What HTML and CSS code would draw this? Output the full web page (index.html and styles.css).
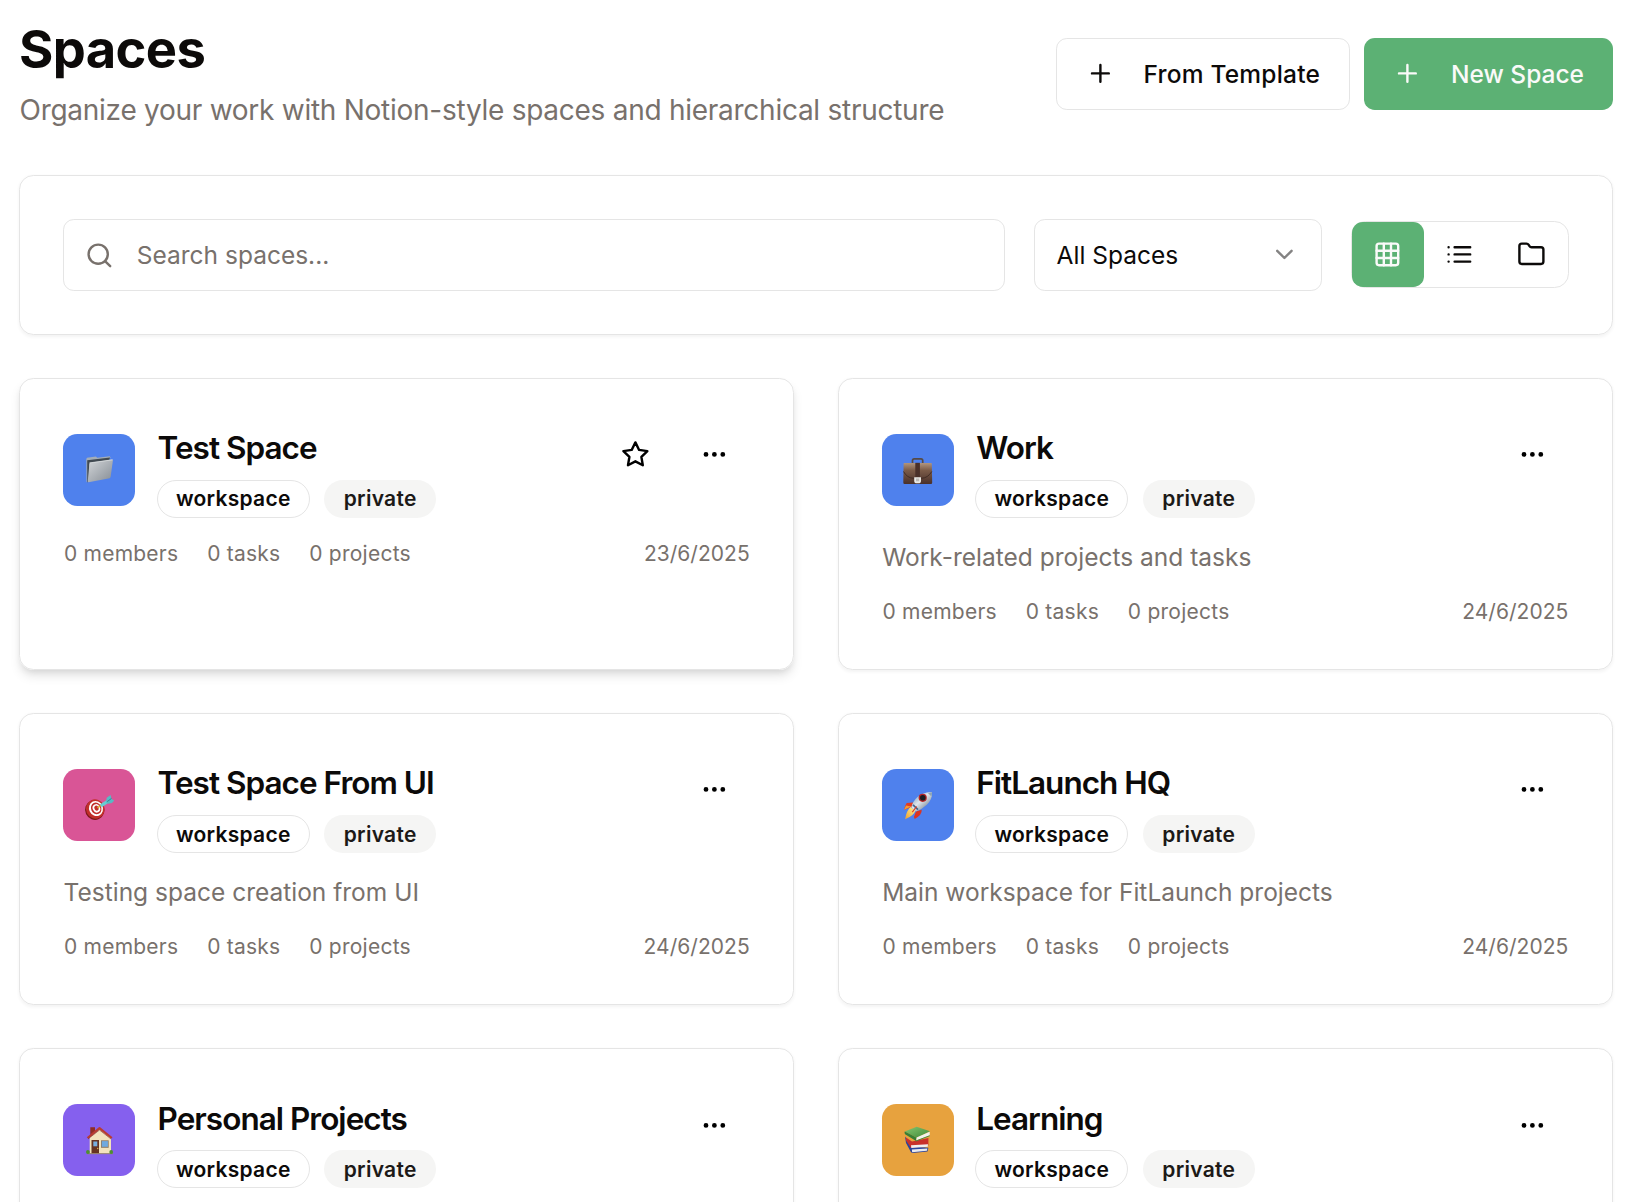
FILE: index.html
```html
<!DOCTYPE html>
<html lang="en">
<head>
<meta charset="utf-8">
<title>Spaces</title>
<link rel="stylesheet" href="styles.css">
</head>
<body>
<svg class="defs" width="0" height="0">
  <defs>
    <linearGradient id="silver" x1="0" y1="0" x2="1" y2="1"><stop offset="0" stop-color="#d3d6d9"/><stop offset="1" stop-color="#858c94"/></linearGradient>
    <linearGradient id="leather" x1="0" y1="0" x2="0" y2="1"><stop offset="0" stop-color="#b0957f"/><stop offset=".35" stop-color="#7b5b48"/><stop offset="1" stop-color="#49302a"/></linearGradient>
    <linearGradient id="hull" x1="0" y1="0" x2="1" y2="1"><stop offset="0" stop-color="#5f88ab"/><stop offset=".45" stop-color="#dfe6ec"/><stop offset="1" stop-color="#4c5e6e"/></linearGradient>
    <linearGradient id="flame" x1="1" y1="0" x2="0" y2="1"><stop offset="0" stop-color="#fff59a"/><stop offset="1" stop-color="#f0a02c"/></linearGradient>
    <linearGradient id="cover" x1="0" y1="0" x2="1" y2="1"><stop offset="0" stop-color="#86c671"/><stop offset="1" stop-color="#3d8a38"/></linearGradient>
    <symbol id="dots" viewBox="0 0 24 24"><circle cx="12" cy="12" r="1"/><circle cx="19" cy="12" r="1"/><circle cx="5" cy="12" r="1"/></symbol>
    <symbol id="plus" viewBox="0 0 24 24"><path d="M5 12h14M12 5v14"/></symbol>
  </defs>
</svg>
<main class="page">
  <header class="page-header">
    <div>
      <h1 class="page-title">Spaces</h1>
      <p class="page-subtitle">Organize your work with Notion-style spaces and hierarchical structure</p>
    </div>
    <div class="header-actions">
      <button class="btn btn-outline"><svg class="icon"><use href="#plus"/></svg><span>From Template</span></button>
      <button class="btn btn-primary"><svg class="icon"><use href="#plus"/></svg><span>New Space</span></button>
    </div>
  </header>

  <section class="toolbar">
    <div class="search">
      <svg class="icon" viewBox="0 0 24 24"><circle cx="11" cy="11" r="8"/><path d="m21 21-4.3-4.3"/></svg>
      <span>Search spaces...</span>
    </div>
    <div class="select">
      <span>All Spaces</span>
      <svg class="icon chevron" viewBox="0 0 24 24"><path d="m6 9 6 6 6-6"/></svg>
    </div>
    <div class="views">
      <button class="view active"><svg class="icon" viewBox="0 0 24 24"><rect x="3" y="3" width="18" height="18" rx="2"/><path d="M3 9h18M3 15h18M9 3v18M15 3v18"/></svg></button>
      <button class="view"><svg class="icon" viewBox="0 0 24 24"><path d="M8 6h13M8 12h13M8 18h13M3 6h.01M3 12h.01M3 18h.01"/></svg></button>
      <button class="view"><svg class="icon" viewBox="0 0 24 24"><path d="M20 20a2 2 0 0 0 2-2V8a2 2 0 0 0-2-2h-7.9a2 2 0 0 1-1.69-.9L9.6 3.9A2 2 0 0 0 7.93 3H4a2 2 0 0 0-2 2v13a2 2 0 0 0 2 2Z"/></svg></button>
    </div>
  </section>

  <section class="grid">
    <article class="card raised">
      <div class="card-head">
        <div class="tile blue">
          <svg viewBox="0 0 72 72">
            <path d="M23.300 25 24 23.700l9-1.200 1.200 1.200 12.600-1.400.8 1.200-22.500 22-1.600 2.900Z" fill="#a3adb8"/>
            <path d="M24.200 26.200 47 23.500l-1.200 4-19.500 2.500-.6 18-1.400.2Z" fill="#414a52"/>
            <path d="M26.500 28.700 49.300 25.600Q50 25.600 49.900 26.500L47.600 43 46.700 44.200 25.500 48.300 24.700 48Z" fill="url(#silver)"/>
            <path d="M26.500 28.900 49.500 25.800" stroke="#e5e8ea" stroke-width=".7"/>
          </svg>
        </div>
        <div class="heading"><h2>Test Space</h2><div class="badges"><span class="badge outline">workspace</span><span class="badge soft">private</span></div></div>
        <div class="actions">
          <button class="action"><svg class="icon" viewBox="0 0 24 24"><path d="m12 2 3.090 6.260L22 9.270l-5 4.870 1.180 6.880L12 17.770l-6.180 3.250L7 14.140 2 9.270l6.910-1.010Z"/></svg></button>
          <button class="action"><svg class="icon"><use href="#dots"/></svg></button>
        </div>
      </div>
      <div class="stats"><span>0 members</span><span>0 tasks</span><span>0 projects</span><time>23/6/2025</time></div>
    </article>

    <article class="card">
      <div class="card-head">
        <div class="tile blue">
          <svg viewBox="0 0 72 72">
            <path d="M30.500 29v-2.500q0-1.700 1.700-1.700h6.800q1.700 0 1.700 1.700V29" fill="none" stroke="#564a46" stroke-width="1.700"/>
            <path d="M22 29h27q.8 0 .8.8L50.200 48.500q0 1.500-1.300 1.500H22.600q-1.300 0-1.300-1.500l.3-18.700q0-.8.4-.8Z" fill="url(#leather)"/>
            <path d="M21.500 37.500q3.500 6.500 10 6.800h8q6.500-.3 10.300-6.800" fill="none" stroke="#3d2922" stroke-width=".9"/>
            <rect x="33.300" y="28.800" width="4.600" height="14.500" fill="#4a3029"/>
            <path d="M32.200 43.200h6.800v3.500q0 2.600-2.600 2.600h-1.600q-2.600 0-2.600-2.600Z" fill="#e9e8e5"/>
            <rect x="34" y="44.500" width="3.200" height="2.800" fill="#bcb9b5"/>
          </svg>
        </div>
        <div class="heading"><h2>Work</h2><div class="badges"><span class="badge outline">workspace</span><span class="badge soft">private</span></div></div>
        <div class="actions"><button class="action"><svg class="icon"><use href="#dots"/></svg></button></div>
      </div>
      <p class="desc">Work-related projects and tasks</p>
      <div class="stats"><span>0 members</span><span>0 tasks</span><span>0 projects</span><time>24/6/2025</time></div>
    </article>

    <article class="card lower">
      <div class="card-head">
        <div class="tile pink">
          <svg viewBox="0 0 72 72">
            <ellipse cx="31.700" cy="41" rx="9.600" ry="10" transform="rotate(-25 31.700 41)" fill="#7d1919"/>
            <ellipse cx="32.300" cy="40" rx="9.300" ry="9.700" transform="rotate(-25 32.300 40)" fill="#c22f2b"/>
            <ellipse cx="33" cy="39.500" rx="6.900" ry="7.700" transform="rotate(-25 33 39.500)" fill="#fff"/>
            <ellipse cx="33.200" cy="39.400" rx="5.200" ry="5.900" transform="rotate(-25 33.200 39.400)" fill="#c22f2b"/>
            <ellipse cx="33.400" cy="39.300" rx="3.700" ry="4.300" transform="rotate(-25 33.400 39.300)" fill="#fff"/>
            <ellipse cx="33.500" cy="39.200" rx="2.100" ry="2.600" transform="rotate(-25 33.500 39.200)" fill="#c22f2b"/>
            <path d="M34.500 38.800 39 35.500" stroke="#d6ae38" stroke-width="1.500"/>
            <path d="M37.800 36.800 45.800 31.600" stroke="#66cdd2" stroke-width="3.300"/>
            <path d="m43 33.300.7-4.500 3.900-2.800.9 3.900 2.700 1.700-2.200 2.300-4.200.9Z" fill="#58b9c4"/>
            <path d="m44.200 32.600 4.300-3.200" stroke="#2d7e91" stroke-width=".9"/>
          </svg>
        </div>
        <div class="heading"><h2>Test Space From UI</h2><div class="badges"><span class="badge outline">workspace</span><span class="badge soft">private</span></div></div>
        <div class="actions"><button class="action"><svg class="icon"><use href="#dots"/></svg></button></div>
      </div>
      <p class="desc">Testing space creation from UI</p>
      <div class="stats"><span>0 members</span><span>0 tasks</span><span>0 projects</span><time>24/6/2025</time></div>
    </article>

    <article class="card lower">
      <div class="card-head">
        <div class="tile blue">
          <svg viewBox="0 0 72 72">
            <path d="M31.500 33.500 24.700 34q-1.700 2.500-2.700 6.700l7.600-2.400Z" fill="#e23b22"/>
            <path d="m22 40.700 2-4.200 5.300 1Z" fill="#f39a32"/>
            <path d="m34 42.500 5.700-1.700q.5 5-7 9.300l-.8-2Z" fill="#dd3420"/>
            <path d="m28.500 38 5 3.600q-1.500 5.200-10.400 8.700 1.200-8.500 5.400-12.300Z" fill="url(#flame)"/>
            <path d="M50 23.300q.6 6.900-5.200 12.500-4.300 4.200-10.900 6.700l-4.600-4.300q1.600-6 6.200-10.200 6.600-5.400 14.500-4.700Z" fill="url(#hull)"/>
            <path d="m31 35.800 5 4.800" stroke="#3f6690" stroke-width="1.700"/>
            <path d="M46 24.200q2.600-.9 4-.9.300 1.900-.5 4.300Z" fill="#8da4b5"/>
            <circle cx="40.700" cy="28.800" r="4.100" fill="#b72425"/>
            <circle cx="40.800" cy="28.700" r="2.800" fill="#191d22"/>
            <path d="m34.600 37.500-4.300 5.700" stroke="#e23b22" stroke-width="1.200"/>
          </svg>
        </div>
        <div class="heading"><h2>FitLaunch HQ</h2><div class="badges"><span class="badge outline">workspace</span><span class="badge soft">private</span></div></div>
        <div class="actions"><button class="action"><svg class="icon"><use href="#dots"/></svg></button></div>
      </div>
      <p class="desc">Main workspace for FitLaunch projects</p>
      <div class="stats"><span>0 members</span><span>0 tasks</span><span>0 projects</span><time>24/6/2025</time></div>
    </article>

    <article class="card lower last">
      <div class="card-head">
        <div class="tile purple">
          <svg viewBox="0 0 72 72">
            <path d="M27.300 23.300h4.700v6l-4.700 4.200Z" fill="#8f2d25"/>
            <path d="M26.700 33.200 36.700 25 48 33.200V49.500H26.700Z" fill="#f3e2bd"/>
            <path d="M24.500 34 36.500 24.200 48.800 34" fill="none" stroke="#b93b32" stroke-width="2.200" stroke-linejoin="round"/>
            <path d="M25 35 36.500 26 48 35" fill="none" stroke="#7a2924" stroke-width=".6"/>
            <rect x="28.500" y="36" width="7.500" height="13.500" fill="#663322"/>
            <rect x="30.300" y="37.500" width="4" height="4.800" fill="#78afe0"/>
            <circle cx="34.700" cy="44.500" r=".7" fill="#e2b64b"/>
            <rect x="38" y="36.300" width="7.700" height="7.500" fill="#8d7963"/>
            <rect x="38.800" y="37.100" width="6.100" height="5.700" fill="#70a9df"/>
            <path d="M24 49.700h26" stroke="#988569" stroke-width="1"/>
            <circle cx="24.900" cy="48" r="1.900" fill="#4e8e32"/><circle cx="48.200" cy="48" r="1.900" fill="#4e8e32"/>
          </svg>
        </div>
        <div class="heading"><h2>Personal Projects</h2><div class="badges"><span class="badge outline">workspace</span><span class="badge soft">private</span></div></div>
        <div class="actions"><button class="action"><svg class="icon"><use href="#dots"/></svg></button></div>
      </div>
    </article>

    <article class="card lower last">
      <div class="card-head">
        <div class="tile orange">
          <svg viewBox="0 0 72 72">
            <path d="m23 32.500 1 6.500 5 9.300 1.600.6 14.900-1.400.9-3.800-15.700-1.200Z" fill="#29439d"/>
            <path d="m29.800 45.600 15.600-1.200-.5 2.400-14.700 1.400Z" fill="#e8eaee"/>
            <path d="m24 33.500 6 4 16.400-3.500v7.500l-17.400 2.600-5-7.500Z" fill="#c9312b"/>
            <path d="m29 41.300 17-1-.3 2.500-16.400 1.100Z" fill="#f0eeee"/>
            <path d="m22.700 27.500 12-4.800 13.300 4.500-13.400 6.600Z" fill="url(#cover)"/>
            <path d="M22.700 27.500q-.7 2 .8 3l10.600 6.500.6-3.300Z" fill="#367e35"/>
            <path d="m34.600 33.600 13.100-5.800v3.700L34.300 36.500Z" fill="#f1f2ed"/>
            <path d="m33.900 37 13.800-5.300" stroke="#3e8539" stroke-width=".9"/>
          </svg>
        </div>
        <div class="heading"><h2>Learning</h2><div class="badges"><span class="badge outline">workspace</span><span class="badge soft">private</span></div></div>
        <div class="actions"><button class="action"><svg class="icon"><use href="#dots"/></svg></button></div>
      </div>
    </article>
  </section>
</main>
</body>
</html>
```
FILE: styles.css
```css
* { box-sizing: border-box; }
html, body { margin: 0; height: 1202px; overflow: hidden; }
body {
  background: #fff;
  color: #0c0a09;
  font-family: Inter, "Liberation Sans", sans-serif;
  font-size: 24.500px;
  line-height: 36px;
  -webkit-font-smoothing: antialiased;
}
h1, h2, p { margin: 0; }
button { font: inherit; color: inherit; background: none; border: 0; margin: 0; padding: 0; }
.defs { position: absolute; }
.page { height: 1202px; overflow: hidden; padding: 16.600px 25px 0 19px; }
.icon {
  width: 28.800px; height: 28.800px; flex: none;
  fill: none; stroke: currentColor; stroke-width: 2;
  stroke-linecap: round; stroke-linejoin: round;
}

.page-header { display: flex; justify-content: space-between; align-items: center; height: 115.200px; margin-bottom: 43.200px; }
.page-title { font-size: 52.500px; line-height: 64.800px; font-weight: 700; letter-spacing: -0.650px; }
.page-subtitle { margin-top: 7.200px; padding-left: 0.500px; font-size: 28px; line-height: 43.200px; color: #78716c; letter-spacing: -0.265px; white-space: nowrap; }
.header-actions { display: flex; gap: 14.400px; }
.btn {
  display: flex; align-items: center; gap: 28.800px; height: 72px;
  padding: 0 28px 1px 29.400px; border-radius: 10.800px; font-weight: 500; white-space: nowrap;
}
.btn span { padding-top: 1px; }
.btn-outline { width: 294px; border: 1px solid #e5e5e5; letter-spacing: 0.200px; }
.btn-primary { width: 249px; background: #5cb174; color: #fafaf9; }

.toolbar {
  display: flex; align-items: center; gap: 28.800px; padding: 43.200px; margin-bottom: 42.800px;
  border: 1px solid #e5e5e5; border-radius: 14.400px;
  box-shadow: 0 1.800px 3.600px rgba(0, 0, 0, .05);
}
.search, .select { display: flex; align-items: center; height: 72px; border: 1px solid #e5e5e5; border-radius: 10.800px; }
.search { flex: 1; gap: 23px; padding-left: 20.800px; color: #78716c; }
.select { width: 288px; justify-content: space-between; padding: 0 22.600px 0 21.600px; }
.chevron { opacity: .5; margin-bottom: 1.400px; }
.views { display: flex; border: 1px solid #e5e5e5; border-radius: 14.400px; margin-bottom: 1.800px; }
.view { width: 72px; height: 64.800px; display: grid; place-items: center; border-radius: 10.800px; }
.view.active { background: #5cb174; color: #fafaf9; }

.grid { display: grid; grid-template-columns: 1fr 1fr; gap: 43.200px; }
.card {
  height: 291.850px; padding: 43.200px; border: 1px solid #e5e5e5; border-radius: 14.400px;
  box-shadow: 0 1.800px 3.600px rgba(0, 0, 0, .05);
}
.card.raised { box-shadow: 0 7.200px 10.800px -1.800px rgba(0, 0, 0, .1), 0 3.600px 7.200px -3.600px rgba(0, 0, 0, .1); }
.card-head { display: flex; align-items: center; height: 95.400px; gap: 21.600px; }
.tile { width: 72px; height: 72px; border-radius: 14.400px; flex: none; }
.tile svg { display: block; width: 72px; height: 72px; }
.blue { background: #4f81ed; }
.pink { background: #d95596; }
.purple { background: #8560ee; }
.orange { background: #e7a23e; }
.heading { flex: 1; }
h2 { height: 50.400px; padding: 0.450px 0 0 0.800px; font-size: 31.500px; line-height: 50.400px; font-weight: 600; letter-spacing: -0.980px; white-space: nowrap; }
.last h2 { padding-top: 1.400px; }
.badges { display: flex; gap: 14.400px; margin-top: 7.200px; }
.badge {
  height: 37.800px; display: flex; align-items: center; justify-content: center; padding-top: 0.900px;
  border-radius: 19px; font-size: 21px; line-height: 28.800px; font-weight: 600; letter-spacing: 0.280px;
}
.lower .badge { padding-top: 2.800px; }
.badge.outline { width: 153px; border: 1px solid #e5e5e5; }
.badge.soft { width: 112px; background: #f5f5f4; color: #1c1917; }
.actions { display: flex; gap: 7.200px; align-self: flex-start; margin-top: -0.500px; }
.last .actions { margin-top: 0.500px; }
.action { width: 72px; height: 64.800px; display: grid; place-items: center; color: #000; }
.desc { margin-top: 21.600px; padding-left: 0.400px; color: #78716c; white-space: nowrap; }
.stats {
  display: flex; gap: 28.800px; margin-top: 22.200px; padding: 0 0.500px 0 0.700px;
  font-size: 21px; line-height: 28.800px; letter-spacing: 0.240px; color: #78716c; white-space: nowrap;
}
.desc + .stats { margin-top: 22.500px; }
.stats time { margin-left: auto; letter-spacing: 0.030px; }
```
